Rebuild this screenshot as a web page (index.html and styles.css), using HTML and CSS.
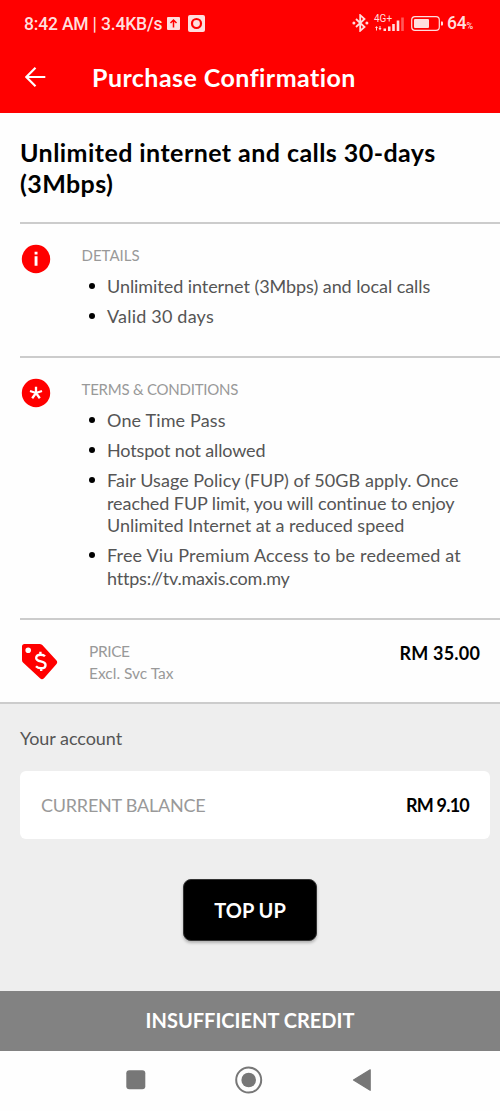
FILE: index.html
```html
<!DOCTYPE html>
<html lang="en">
<head>
<meta charset="utf-8">
<title>Purchase Confirmation</title>
<link rel="stylesheet" href="styles.css">
</head>
<body>
<div class="screen">
  <header class="header">
    <div class="status">
      <span class="clock">8:42 AM | 3.4KB/s</span>
      <svg class="upload" width="13" height="13" viewBox="0 0 13 13"><rect width="13" height="13" rx="1" fill="#ffdede"/><path d="M6.5 10.500V3M3.500 6l3-3 3 3" fill="none" stroke="#f00" stroke-width="1.500"/></svg>
      <svg class="record" width="17" height="17" viewBox="0 0 17 17"><rect width="17" height="17" rx="2" fill="#ffdede"/><circle cx="8.500" cy="8.500" r="4.500" fill="none" stroke="#f00" stroke-width="2.200"/></svg>
      <div class="indicators">
        <svg class="bluetooth" width="17" height="18" viewBox="0 0 17 18"><path d="M4 5l8.500 8-4.300 3.800V1.200L12.500 5 4 13" fill="none" stroke="#ffdede" stroke-width="1.800"/><circle cx="1.900" cy="9" r="1.500" fill="#ffdede"/><circle cx="14.900" cy="9" r="1.500" fill="#ffdede"/></svg>
        <div class="network">
          <span class="gen">4G+</span>
          <svg width="32" height="15" viewBox="0 0 32 15"><g fill="#ffdede"><path d="M1 12l1.500-2L4 12H3v2.500H2V12zM4.500 12h1v-2h1v2h1L6 14.500z"/><path d="M9.500 12.500h2.500V15H9.500zM14 10.500h2.500V15H14zM18.200 8h2.600v7h-2.600zM22.700 4.500h2.600V15h-2.600z"/><path opacity=".4" d="M27.200 1.500h2.600V15h-2.600z"/></g></svg>
        </div>
        <svg class="battery" width="33" height="15" viewBox="0 0 33 15"><rect x=".7" y=".7" width="27.600" height="13.600" rx="3.300" fill="none" stroke="#ffdede" stroke-width="1.200"/><rect x="3" y="3" width="15" height="9" rx="1" fill="#ffdede"/><path d="M30 5.500h1.200q.8 0 .8.800v2.400q0 .8-.8.800H30z" fill="#ffdede"/></svg>
        <span class="charge">64<small>%</small></span>
      </div>
    </div>
    <div class="appbar">
      <svg width="21" height="20" viewBox="0 0 21 20"><path d="M20.300 10H1.500M10.500.800L1.300 10l9.200 9.200" fill="none" stroke="#fff" stroke-width="2.200"/></svg>
      <h1 class="page-title">Purchase Confirmation</h1>
    </div>
  </header>

  <main class="plan">
    <h2 class="plan-name"><span class="n1">Unlimited internet and calls 30-days</span> <span class="n2">(3Mbps)</span></h2>
    <section class="section details">
      <svg class="icon" width="30" height="30" viewBox="0 0 30 30"><circle cx="15" cy="15" r="14.200" fill="#f00"/><path d="M13.600 7.800h2.900v2.600h-2.900zM13.600 12.200h2.900V21.800h-2.900z" fill="#fff"/></svg>
      <div class="copy">
        <h3 class="label">DETAILS</h3>
        <ul class="list">
          <li class="a1">Unlimited internet (3Mbps) and local calls</li>
          <li class="a2">Valid 30 days</li>
        </ul>
      </div>
    </section>
    <section class="section terms">
      <svg class="icon" width="30" height="30" viewBox="0 0 30 30"><circle cx="15" cy="15" r="14.200" fill="#f00"/><path d="M15 15V8.700M15 15l-6-2M15 15l6-2M15 15l-3.800 5.200M15 15l3.800 5.200" fill="none" stroke="#fff" stroke-width="2.300"/></svg>
      <div class="copy">
        <h3 class="label terms-label">TERMS &amp; CONDITIONS</h3>
        <ul class="list">
          <li class="b1">One Time Pass</li>
          <li class="b2">Hotspot not allowed</li>
          <li><span class="b3">Fair Usage Policy (FUP) of 50GB apply. Once</span><br><span class="b4">reached FUP limit, you will continue to enjoy</span><br><span class="b5">Unlimited Internet at a reduced speed</span></li>
          <li><span class="b6">Free Viu Premium Access to be redeemed at</span><br><span class="b7">https://tv.maxis.com.my</span></li>
        </ul>
      </div>
    </section>
    <section class="section price">
      <svg class="tag" width="37" height="37" viewBox="0 0 37 37"><path fill-rule="evenodd" d="M3.500 1H18.500q1.600 0 2.800 1L35.300 17.200q1.800 2 0 4L23 35.200q-2 2-4 0L2 19.500Q1 18.500 1 17V3.500Q1 1 3.500 1zM7.200 4.400a2.800 2.800 0 1 0 0 5.600 2.800 2.800 0 1 0 0-5.600z" fill="#f00"/><path d="M24 13.300q-1.500-1.600-4.500-1.600c-2.600 0-4.300 1.200-4.300 3.200 0 4.900 9.300 2 9.300 7 0 2-1.700 3.400-4.500 3.400q-3.200 0-5-2M19.400 8.800v3M20.200 25v3" fill="none" stroke="#fff" stroke-width="2.400"/></svg>
      <div class="price-copy">
        <span class="p1">PRICE</span>
        <span class="p2">Excl. Svc Tax</span>
      </div>
      <strong class="amount">RM 35.00</strong>
    </section>
  </main>

  <section class="account">
    <h3 class="account-title">Your account</h3>
    <div class="balance">
      <span class="balance-label">CURRENT BALANCE</span>
      <strong class="balance-value">RM 9.10</strong>
    </div>
    <button class="topup">TOP UP</button>
  </section>
  <div class="credit-bar"><span>INSUFFICIENT CREDIT</span></div>
  <nav class="nav">
    <svg width="20" height="20" viewBox="0 0 20 20"><rect x=".3" y=".3" width="19" height="19" rx="3" fill="#777"/></svg>
    <svg width="28" height="28" viewBox="0 0 28 28"><circle cx="13.700" cy="14" r="12.500" fill="none" stroke="#777" stroke-width="2"/><circle cx="13.700" cy="14" r="7.300" fill="#777"/></svg>
    <svg width="20" height="24" viewBox="0 0 20 24"><path d="M18.200 1.800v20.500L1.500 12z" fill="#777" stroke="#777" stroke-width="1.200" stroke-linejoin="round"/></svg>
  </nav>
</div>
</body>
</html>
```
FILE: styles.css
```css
* { box-sizing: border-box; }
body { margin: 0; font-family: Lato, "Open Sans", sans-serif; font-variant-ligatures: none; background: #fefefe; }
svg { display: block; flex: none; }
h1, h2, h3, ul { margin: 0; padding: 0; }
span, h1, li, strong { white-space: nowrap; }
.screen { width: 500px; height: 1111px; display: flex; flex-direction: column; overflow: hidden; }

.header { height: 113px; background: #f00; color: #fff; }
.status { height: 46px; padding: 0 26px 0 24px; display: flex; align-items: center; font-family: Roboto, sans-serif; font-weight: 500; color: #ffdede; }
.clock { width: 143px; font-size: 17.5px; line-height: 20px; padding-top: 2px; letter-spacing: -.18px; }
.record { margin-left: 8px; }
.indicators { margin-left: auto; display: flex; align-items: center; }
.bluetooth { margin-right: 5px; }
.network { width: 32px; height: 22px; margin-right: 5px; display: grid; }
.network > * { grid-area: 1 / 1; }
.network svg { align-self: end; margin-bottom: 3px; }
.gen { font-size: 10px; line-height: 14px; font-weight: 400; }
.battery { margin-right: 3px; }
.charge { width: 27px; font-size: 17.5px; line-height: 20px; padding-top: 2px; letter-spacing: -.2px; }
.charge small { font-size: 9px; }
.appbar { height: 62px; padding-left: 25px; display: flex; align-items: center; gap: 46px; }
.page-title { font-size: 25px; font-weight: 700; line-height: 30px; letter-spacing: .45px; }

.plan { height: 591px; border-bottom: 2px solid #ccc; padding-left: 20px; }
.plan-name { height: 109px; padding-top: 23.5px; font-size: 25px; line-height: 31px; font-weight: 700; color: #000; }
.plan-name span { display: block; }
.n1 { letter-spacing: .44px; }
.n2 { letter-spacing: .4px; }
.section { border-top: 2px solid #ccc; display: flex; }
.details { height: 134px; }
.terms { height: 262px; }
.icon { margin: 20px 0 0 .5px; width: 30px; }
.copy { margin-left: 31px; padding-top: 20px; }
.label { font-size: 15px; line-height: 22px; font-weight: 400; color: #999; }
.terms-label { letter-spacing: -.23px; }
.list { list-style: none; padding: 9px 0 0 25.5px; display: grid; gap: 7.7px; font-size: 18px; line-height: 22.4px; color: #555; }
.list li { display: block; }
.list li::before { content: ""; float: left; width: 6px; height: 6px; margin: 7.5px 0 0 -18px; border-radius: 50%; background: #000; }
.a1 { letter-spacing: -.06px; }
.a2 { letter-spacing: .2px; }
.b1 { letter-spacing: .15px; }
.b2 { letter-spacing: -.15px; }
.b3 { letter-spacing: .05px; }
.b4 { letter-spacing: -.08px; }
.b5 { letter-spacing: -.02px; }
.b6 { letter-spacing: .17px; }
.b7 { letter-spacing: -.2px; }
.price { padding: 23px 20px 0 1px; }
.price-copy { margin: -3px 0 0 31px; display: flex; flex-direction: column; font-size: 15.5px; line-height: 22px; color: #999; }
.p1 { letter-spacing: -.4px; }
.amount { margin: -1px 0 0 auto; font-size: 18px; line-height: 22px; letter-spacing: .18px; color: #000; }

.account { height: 287px; background: #eee; padding: 23px 10px 0 20px; display: flex; flex-direction: column; }
.account-title { font-size: 18px; line-height: 22px; font-weight: 400; color: #555; letter-spacing: -.05px; }
.balance { height: 68px; margin-top: 22px; padding: 0 21px; display: flex; align-items: center; justify-content: space-between; background: #fff; border-radius: 6px; font-size: 18px; }
.balance-label { color: #999; letter-spacing: -.23px; }
.balance-value { color: #000; letter-spacing: -.8px; }
.topup { width: 134px; height: 62px; margin: 40px 0 0 163px; padding: 0; border: 1px solid #333; border-radius: 8px; background: #000; color: #fff; font: 700 20px Lato, sans-serif; box-shadow: 0 2px 3px rgba(0, 0, 0, .25); }
.credit-bar { height: 60px; padding-bottom: 2px; background: #828282; color: #fff; display: flex; align-items: center; justify-content: center; font-size: 20px; font-weight: 700; }
.nav { height: 60px; padding: 0 128px 3px 126px; display: flex; align-items: center; justify-content: space-between; background: #fefefe; }
```
